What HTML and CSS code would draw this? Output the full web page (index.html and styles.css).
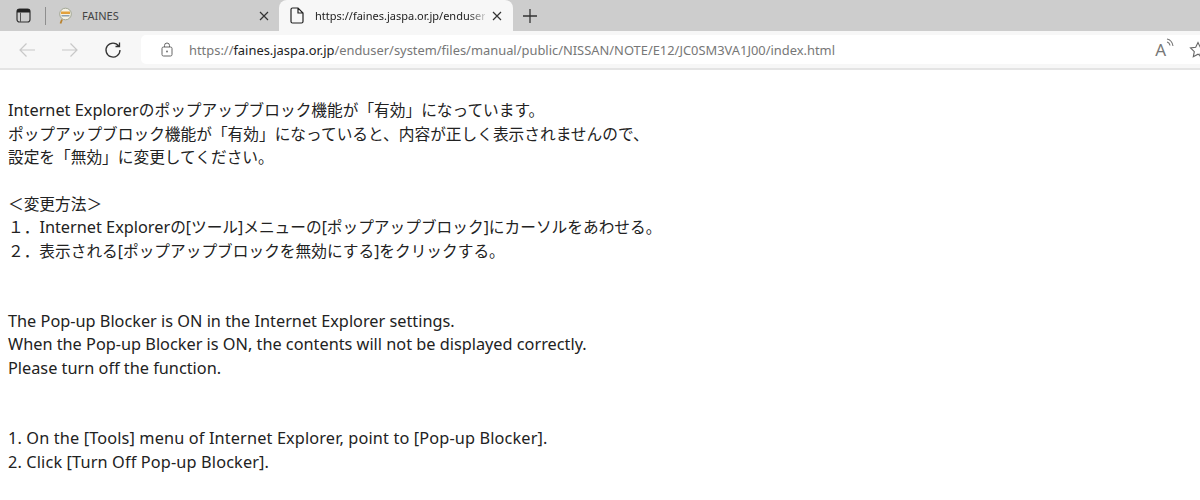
FILE: index.html
```html
<!DOCTYPE html>
<html>
<head>
    <meta charset="UTF-8">
    <title>FAINES</title>
    <link rel="stylesheet" href="styles.css">
</head>
<body>
    <div class="browser">
        <div class="tabbar">
            <div class="tab-tools">
                <svg class="icon" width="15" height="15" viewBox="0 0 15 15"><rect x="1" y="1" width="13" height="13" rx="2.500" fill="none" stroke="#333" stroke-width="1.200"/><path d="M1 4.500v-1.500a2 2 0 0 1 2-2h9a2 2 0 0 1 2 2v1.500z" fill="#222"/><path d="M4.500 4.500v9.500" stroke="#555" stroke-width="1"/></svg>
                <span class="divider"></span>
            </div>
            <div class="tab">
                <svg class="favicon" width="16" height="18" viewBox="0 0 16 18"><circle cx="8.500" cy="7" r="5.800" fill="#f4f1e4" stroke="#a3a895"/><path d="M4 4.500h9v2.500h-9z" fill="#e2a13c"/><path d="M4.500 8h8v1.500h-8z" fill="#8ea0b0"/><path d="M5 12.500l-1.500 4" stroke="#b9822e" stroke-width="1.800"/></svg>
                <span class="tab-title">FAINES</span>
                <svg class="tab-close" width="10" height="10" viewBox="0 0 10 10"><path d="M1 1l8 8M9 1l-8 8" stroke="#333" stroke-width="1.200"/></svg>
            </div>
            <div class="tab active">
                <svg class="page-icon" width="14" height="17" viewBox="0 0 14 17"><path d="M2.500 1h5.500l5 5v8.500a1.500 1.500 0 0 1-1.500 1.500h-9a1.500 1.500 0 0 1-1.500-1.500v-12a1.500 1.500 0 0 1 1.500-1.500zM8 1v5h5" fill="none" stroke="#222" stroke-width="1.200"/></svg>
                <span class="tab-title">https://faines.jaspa.or.jp/enduser</span>
                <svg class="tab-close" width="10" height="10" viewBox="0 0 10 10"><path d="M1 1l8 8M9 1l-8 8" stroke="#333" stroke-width="1.200"/></svg>
            </div>
            <svg class="new-tab" width="16" height="16" viewBox="0 0 16 16"><path d="M8 1v14M1 8h14" stroke="#333" stroke-width="1.300"/></svg>
        </div>
        <div class="toolbar">
            <svg class="nav-icon back" width="18" height="16" viewBox="0 0 18 16"><path d="M17 8h-15M8.500 1.500l-6.500 6.500 6.500 6.500" fill="none" stroke="#c8c8c8" stroke-width="1.200"/></svg>
            <svg class="nav-icon forward" width="18" height="16" viewBox="0 0 18 16"><path d="M1 8h15M9.500 1.500l6.500 6.500-6.500 6.500" fill="none" stroke="#c8c8c8" stroke-width="1.200"/></svg>
            <svg class="nav-icon reload" width="18" height="18" viewBox="0 0 18 18"><path d="M14.700 5a7 7 0 1 0 1.300 4M15.500 1.500v4h-4" fill="none" stroke="#333" stroke-width="1.300"/></svg>
            <div class="address">
                <svg class="lock" width="12" height="15" viewBox="0 0 12 15"><rect x="1" y="5" width="10" height="9" rx="1.500" fill="none" stroke="#666"/><path d="M3.500 5v-1.500a2.500 2.500 0 0 1 5 0v1.500" fill="none" stroke="#666"/><circle cx="6" cy="9.500" r="0.900" fill="#666"/></svg>
                <span class="url"><span class="dim">https://</span>faines.jaspa.or.jp<span class="dim">/enduser/system/files/manual/public/NISSAN/NOTE/E12/JC0SM3VA1J00/index.html</span></span>
                <div class="address-right">
                    <span class="read-aloud">A<svg width="8" height="10" viewBox="0 0 8 10"><path d="M1 1q5 1 6 7M1 4q2.500 .5 3 3.500" fill="none" stroke="#777" stroke-width="1.100"/></svg></span>
                    <svg class="star" width="18" height="18" viewBox="0 0 18 18"><path d="M9 1.500l2.300 4.800 5.200.7-3.800 3.600 1 5.200-4.700-2.600-4.700 2.600 1-5.200-3.800-3.600 5.200-.7z" fill="none" stroke="#666" stroke-width="1.100"/><circle cx="14" cy="14" r="3.500" fill="#666"/></svg>
                </div>
            </div>
        </div>
    </div>
    <div class="content">
        <br>
        <span class="en">Internet Explorer</span>のポップアップブロック機能が「有効」になっています。<br>
        ポップアップブロック機能が「有効」になっていると、内容が正しく表示されませんので、<br>
        設定を「無効」に変更してください。<br>
        <br>
        ＜変更方法＞<br>
        １．<span class="en">Internet Explorer</span>の[ツール]メニューの[ポップアップブロック]にカーソルをあわせる。<br>
        ２．表示される[ポップアップブロックを無効にする]をクリックする。<br>
        <br>
        <br>
        <span class="en">The Pop-up Blocker is ON in the Internet Explorer settings.</span><br>
        <span class="en">When the Pop-up Blocker is ON, the contents will not be displayed correctly.</span><br>
        <span class="en">Please turn off the function.</span><br>
        <br>
        <br>
        <span class="en step">1. On the [Tools] menu of Internet Explorer, point to [Pop-up Blocker].</span><br>
        <span class="en step">2. Click [Turn Off Pop-up Blocker].</span>
    </div>
</body>
</html>
```

FILE: styles.css
```css
* {
    box-sizing: border-box;
}

html, body {
    height: 100%;
    overflow: hidden;
}

body {
    margin: 0;
    background: white;
    font-family: "Noto Sans", "Noto Sans CJK JP", sans-serif;
}

.tabbar {
    display: flex;
    align-items: flex-end;
    height: 31px;
    background: #cdcdcd;
}

.tab-tools {
    display: flex;
    align-items: center;
    width: 55px;
    height: 31px;
    padding-left: 16px;
}

.divider {
    width: 1px;
    height: 18px;
    margin-left: 14px;
    background: #8e8e8e;
}

.tab {
    display: flex;
    align-items: center;
    width: 224px;
    height: 31px;
    padding: 0 10px 0 2px;
    font-size: 11px;
    color: #444;
}

.favicon {
    margin-right: 9px;
}

.tab-title {
    flex: 1;
    overflow: hidden;
    white-space: nowrap;
}

.tab.active {
    width: 234px;
    padding: 0 11px;
    background: #f7f7f7;
    border-radius: 8px 8px 0 0;
}

.tab.active .tab-title {
    color: #222;
    -webkit-mask-image: linear-gradient(to right, black 90%, rgba(0,0,0,0.2));
    mask-image: linear-gradient(to right, black 90%, rgba(0,0,0,0.2));
}

.page-icon {
    margin-right: 11px;
}

.tab.active .tab-close {
    margin-left: 7px;
}

.new-tab {
    align-self: center;
    margin-left: 9px;
}

.toolbar {
    display: flex;
    align-items: center;
    height: 39px;
    padding: 4px 0 4px 18px;
    background: #f7f7f7;
    border-bottom: 2px solid #e4e4e4;
}

.back {
    margin-right: 25px;
}

.forward {
    margin-right: 25px;
}

.reload {
    margin-right: 19px;
}

.address {
    flex: 1;
    display: flex;
    align-items: center;
    height: 29px;
    padding-left: 20px;
    background: white;
    border-radius: 5px 0 0 5px;
    font-size: 12.900px;
    color: #222;
}

.lock {
    margin-right: 16px;
}

.url {
    white-space: nowrap;
}

.dim {
    color: #777;
}

.address-right {
    display: flex;
    align-items: center;
    gap: 15px;
    margin-left: auto;
    margin-right: -7px;
}

.read-aloud {
    display: flex;
    align-items: flex-start;
    font-size: 17px;
    color: #777;
}

.content {
    padding: 6px 8px 0;
    font-size: 15.700px;
    line-height: 23.400px;
    color: #222;
    white-space: nowrap;
}

.en {
    font-size: 16.300px;
}

.step {
    letter-spacing: 0.140px;
}
```
